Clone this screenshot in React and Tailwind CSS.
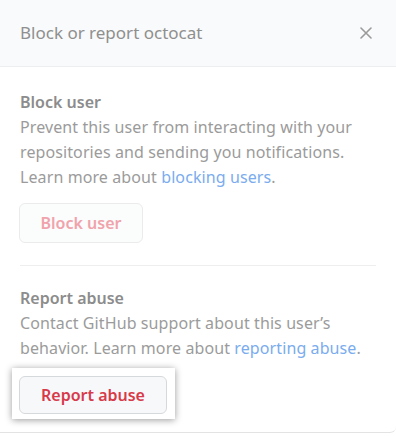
export default function App() {
  return (
    <div
      className="w-[396px] h-[436px] bg-white overflow-hidden"
      style={{ fontFamily: '"Segoe UI", "Noto Sans", "Liberation Sans", sans-serif' }}
    >
      <div className="h-[433px] border-b border-[#e3e3e3] rounded-br-md">
        <div className="h-[67px] bg-[#f9fafb] border-b border-[#eceef0] pl-5 pr-6 flex items-center justify-between">
          <h2 className="text-[17px] text-[#8f8f8f]">Block or report octocat</h2>
          <svg width="12" height="12" viewBox="0 0 12 12" className="text-[#9a9a9a]">
            <path d="M1 1L11 11M11 1L1 11" stroke="currentColor" strokeWidth="1.6" strokeLinecap="round" />
          </svg>
        </div>

        <div className="px-5 pt-[23px]">
          <h3 className="text-[16px] leading-[25px] font-semibold text-[#8c8c8c]">Block user</h3>
          <p className="text-[16px] leading-[25px] text-[#9b9b9b] tracking-[0.1px]">
            Prevent this user from interacting with your repositories and sending you notifications.
            Learn more about <span className="text-[#7aacee]">blocking users</span>.
          </p>
          <button className="mt-[13px] -ml-px w-[124px] h-[40px] rounded-md border border-[#ebebeb] bg-[#fbfcfc] text-[16px] font-semibold text-[#f0a3ab]">
            Block user
          </button>

          <div className="mt-[22px] border-t border-[#eeeeee]"></div>

          <h3 className="mt-[20px] text-[16px] leading-[25px] font-semibold text-[#8c8c8c]">Report abuse</h3>
          <p className="text-[16px] leading-[25px] text-[#9b9b9b] tracking-[0.1px]">
            Contact GitHub support about this user’s behavior. Learn more about{' '}
            <span className="text-[#7aacee]">reporting abuse</span>.
          </p>
          <div className="mt-[7px] -ml-[8px] inline-block bg-white pl-[7px] pr-[8px] pt-[8px] pb-[5px] shadow-[0_1px_7px_rgba(0,0,0,0.4)]">
            <button className="w-[148px] h-[38px] rounded-md border border-[#d6d9dc] bg-[#f7f8fa] text-[16px] font-semibold text-[#d73a49]">
              Report abuse
            </button>
          </div>
        </div>
      </div>
    </div>
  );
}
